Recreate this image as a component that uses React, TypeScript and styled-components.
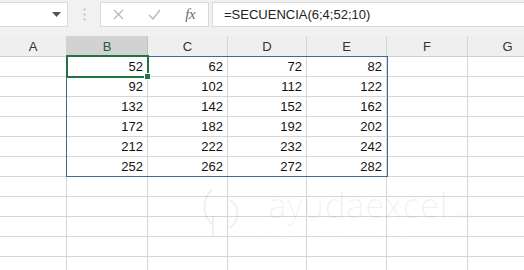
import React from 'react';
import styled, { createGlobalStyle } from 'styled-components';

const GlobalStyle = createGlobalStyle`
  html, body {
    margin: 0;
    padding: 0;
    background: #fff;
  }
  body {
    font-family: 'Liberation Sans', Arial, sans-serif;
  }
`;

const COLS = ['A', 'B', 'C', 'D', 'E', 'F', 'G'];
const COL_WIDTHS = '67px 81px 80px 79px 80px 81px 80px';
const ROW_COUNT = 11;

// valores de =SECUENCIA(6;4;52;10)
const values = (r: number, c: number) => 52 + r * 40 + c * 10;

const Page = styled.div`
  width: 524px;
  height: 270px;
  overflow: hidden;
  position: relative;
  background: #fff;
`;

const FormulaBar = styled.div`
  height: 36px;
  box-sizing: border-box;
  background: #f1f1f1;
  display: flex;
  align-items: flex-start;
  padding-top: 2px;
`;

const NameBox = styled.div`
  width: 68px;
  height: 25px;
  background: #fff;
  border: 1px solid #dadada;
  border-left: none;
  box-sizing: border-box;
  display: flex;
  align-items: center;
  justify-content: flex-end;
  padding-right: 6px;
`;

const Grip = styled.div`
  width: 32px;
  height: 25px;
  display: flex;
  align-items: center;
  justify-content: center;
`;

const ButtonsBox = styled.div`
  width: 109px;
  height: 25px;
  margin-right: 3px;
  background: #fff;
  border: 1px solid #dadada;
  box-sizing: border-box;
  display: flex;
  align-items: center;
`;

const IconButton = styled.div`
  width: 36px;
  height: 23px;
  display: flex;
  align-items: center;
  justify-content: center;
`;

const Fx = styled.span`
  font-family: 'Liberation Serif', 'Times New Roman', serif;
  font-style: italic;
  font-size: 15px;
  color: #6a6a6a;
  letter-spacing: -0.5px;
`;

const FormulaInput = styled.div`
  flex: 1;
  height: 25px;
  background: #fff;
  border: 1px solid #dadada;
  border-right: none;
  box-sizing: border-box;
  display: flex;
  align-items: center;
  padding-left: 11px;
  font-size: 13px;
  color: #222;
`;

const Sheet = styled.div`
  position: relative;
`;

const Row = styled.div`
  display: grid;
  grid-template-columns: ${COL_WIDTHS};
  width: 548px;
`;

const HeaderCell = styled.div<{ $selected?: boolean }>`
  height: 21px;
  box-sizing: border-box;
  background: ${p => (p.$selected ? '#d2d2d2' : '#efefef')};
  border-right: 1px solid ${p => (p.$selected ? '#c0c0c0' : '#d4d4d4')};
  border-bottom: ${p => (p.$selected ? '2px solid #217346' : '1px solid #cfcfcf')};
  display: flex;
  align-items: center;
  justify-content: center;
  font-size: 13px;
  color: ${p => (p.$selected ? '#1f5c3b' : '#333')};
  padding-top: ${p => (p.$selected ? '1px' : '0')};
`;

const Cell = styled.div`
  height: 20px;
  box-sizing: border-box;
  border-right: 1px solid #d6d6d6;
  border-bottom: 1px solid #d6d6d6;
  display: flex;
  align-items: center;
  justify-content: flex-end;
  padding-right: 4px;
  font-size: 13px;
  color: #111;
`;

const SpillRange = styled.div`
  position: absolute;
  left: 66px;
  top: 20px;
  width: 322px;
  height: 121px;
  border: 1px solid #3c6a9c;
  box-sizing: border-box;
  pointer-events: none;
`;

const Selection = styled.div`
  position: absolute;
  left: 66px;
  top: 19px;
  width: 83px;
  height: 23px;
  border: 2px solid #217346;
  box-sizing: border-box;
  pointer-events: none;
`;

const FillHandle = styled.div`
  position: absolute;
  right: -4px;
  bottom: -4px;
  width: 5px;
  height: 5px;
  background: #217346;
  border: 1px solid #fff;
`;

const Watermark = styled.div`
  position: absolute;
  left: 200px;
  top: 150px;
  display: flex;
  align-items: flex-start;
  color: rgba(0, 0, 0, 0.06);
  pointer-events: none;
`;

const WatermarkWord = styled.div`
  display: flex;
  flex-direction: column;
  margin-left: 22px;
`;

const BigWord = styled.span`
  font-family: 'Open Sans', sans-serif;
  font-weight: 300;
  font-size: 35px;
  line-height: 38px;
  letter-spacing: 0.5px;
`;

const Dotcom = styled.span`
  font-family: 'Liberation Serif', serif;
  font-size: 11px;
  margin-left: 3px;
`;

const Tagline = styled.span`
  font-family: 'Liberation Serif', serif;
  font-size: 6px;
  letter-spacing: 0.5px;
  margin-top: 12px;
  margin-left: -18px;
  white-space: nowrap;
`;

export default function App() {
  const rows = Array.from({ length: ROW_COUNT }, (_, r) => r);
  return (
    <Page>
      <GlobalStyle />
      <FormulaBar>
        <NameBox>
          <svg width="9" height="5" viewBox="0 0 9 5">
            <path d="M0 0h9L4.5 5z" fill="#555" />
          </svg>
        </NameBox>
        <Grip>
          <svg width="3" height="13" viewBox="0 0 3 13">
            <circle cx="1.5" cy="1.5" r="1" fill="#b5b5b5" />
            <circle cx="1.5" cy="6.5" r="1" fill="#b5b5b5" />
            <circle cx="1.5" cy="11.5" r="1" fill="#b5b5b5" />
          </svg>
        </Grip>
        <ButtonsBox>
          <IconButton>
            <svg width="11" height="11" viewBox="0 0 11 11">
              <path d="M1 1l9 9M10 1l-9 9" stroke="#b8b8b8" strokeWidth="1.3" />
            </svg>
          </IconButton>
          <IconButton>
            <svg width="13" height="11" viewBox="0 0 13 11">
              <path d="M1 6l4 4 7-9" stroke="#b8b8b8" strokeWidth="1.4" fill="none" />
            </svg>
          </IconButton>
          <IconButton>
            <Fx>fx</Fx>
          </IconButton>
        </ButtonsBox>
        <FormulaInput>=SECUENCIA(6;4;52;10)</FormulaInput>
      </FormulaBar>

      <Sheet>
        <Row>
          {COLS.map(c => (
            <HeaderCell key={c} $selected={c === 'B'}>{c}</HeaderCell>
          ))}
        </Row>
        {rows.map(r => (
          <Row key={r}>
            {COLS.map((c, ci) => (
              <Cell key={c}>
                {r < 6 && ci >= 1 && ci <= 4 ? values(r, ci - 1) : ''}
              </Cell>
            ))}
          </Row>
        ))}
        <SpillRange />
        <Selection>
          <FillHandle />
        </Selection>
        <Watermark>
          <svg width="46" height="52" viewBox="0 0 46 52">
            <path d="M12 4 C2 12 2 30 12 38" stroke="currentColor" strokeWidth="2" fill="none" />
            <path d="M30 14 C40 20 40 34 30 42" stroke="currentColor" strokeWidth="2" fill="none" />
            <path d="M13 30 V50" stroke="currentColor" strokeWidth="2" />
          </svg>
          <WatermarkWord>
            <span>
              <BigWord>ayudaexcel</BigWord>
              <Dotcom>.com</Dotcom>
            </span>
            <Tagline>CONOCIMIENTO Y FORMACIÓN EN EXCEL Y OFFICE</Tagline>
          </WatermarkWord>
        </Watermark>
      </Sheet>
    </Page>
  );
}
